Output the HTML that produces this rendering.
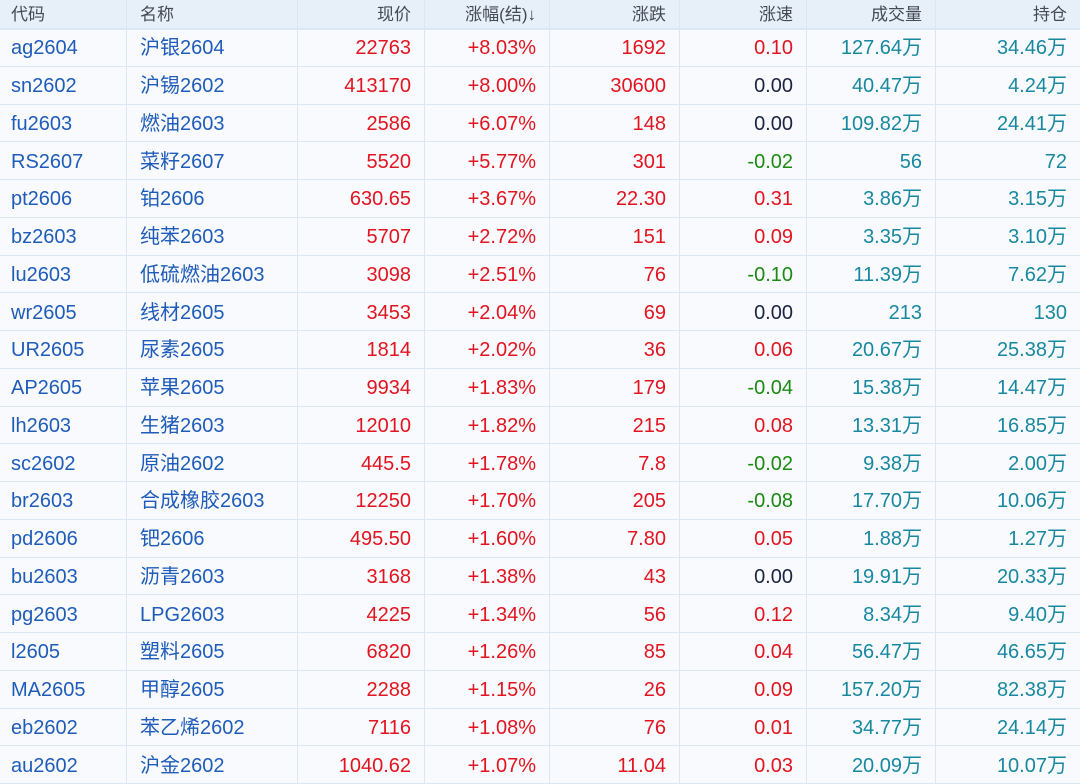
<!DOCTYPE html>
<html><head><meta charset="utf-8"><style>
html,body{margin:0;padding:0;background:#f8fafd;width:1080px;height:784px;overflow:hidden;position:relative;font-family:"Liberation Sans","Noto Sans CJK SC",sans-serif}
.row{position:absolute;left:0;width:1080px;display:flex;box-sizing:border-box;border-bottom:1.5px solid #dce7f5}
.row>div{box-sizing:border-box;height:100%;display:flex;align-items:center;justify-content:flex-end;padding:2px 13px 0;border-right:1.5px solid #dce7f5;white-space:nowrap;line-height:1}
.row>div:last-child{border-right:none}
.row>div:nth-child(1){width:127px;justify-content:flex-start;padding-left:11px;color:#1f5cb9}
.row>div:nth-child(2){width:171px;justify-content:flex-start;color:#1f5cb9}
.row>div:nth-child(3){width:127px;color:#e2141f}
.row>div:nth-child(4){width:125px;color:#e2141f}
.row>div:nth-child(5){width:130px;color:#e2141f}
.row>div:nth-child(6){width:127px}
.row>div:nth-child(7){width:129px;color:#1888a0}
.row>div:nth-child(8){width:144px;color:#1888a0}
.h{top:0;height:30px;background:#e7eff9;font-size:17px;border-bottom:2px solid #dce7f5}
.h>div{color:#444a55!important;padding-top:0!important}
.d{height:37.75px;font-size:20px}
.r{color:#e2141f}.g{color:#1b8a12}.k{color:#1c2440}
</style></head><body>
<div class="row h"><div>代码</div><div>名称</div><div>现价</div><div>涨幅(结)↓</div><div>涨跌</div><div>涨速</div><div>成交量</div><div>持仓</div></div>
<div class="row d" style="top:29px"><div>ag2604</div><div>沪银2604</div><div>22763</div><div>+8.03%</div><div>1692</div><div class="r">0.10</div><div>127.64万</div><div>34.46万</div></div>
<div class="row d" style="top:66.75px"><div>sn2602</div><div>沪锡2602</div><div>413170</div><div>+8.00%</div><div>30600</div><div class="k">0.00</div><div>40.47万</div><div>4.24万</div></div>
<div class="row d" style="top:104.5px"><div>fu2603</div><div>燃油2603</div><div>2586</div><div>+6.07%</div><div>148</div><div class="k">0.00</div><div>109.82万</div><div>24.41万</div></div>
<div class="row d" style="top:142.25px"><div>RS2607</div><div>菜籽2607</div><div>5520</div><div>+5.77%</div><div>301</div><div class="g">-0.02</div><div>56</div><div>72</div></div>
<div class="row d" style="top:180px"><div>pt2606</div><div>铂2606</div><div>630.65</div><div>+3.67%</div><div>22.30</div><div class="r">0.31</div><div>3.86万</div><div>3.15万</div></div>
<div class="row d" style="top:217.75px"><div>bz2603</div><div>纯苯2603</div><div>5707</div><div>+2.72%</div><div>151</div><div class="r">0.09</div><div>3.35万</div><div>3.10万</div></div>
<div class="row d" style="top:255.5px"><div>lu2603</div><div>低硫燃油2603</div><div>3098</div><div>+2.51%</div><div>76</div><div class="g">-0.10</div><div>11.39万</div><div>7.62万</div></div>
<div class="row d" style="top:293.25px"><div>wr2605</div><div>线材2605</div><div>3453</div><div>+2.04%</div><div>69</div><div class="k">0.00</div><div>213</div><div>130</div></div>
<div class="row d" style="top:331px"><div>UR2605</div><div>尿素2605</div><div>1814</div><div>+2.02%</div><div>36</div><div class="r">0.06</div><div>20.67万</div><div>25.38万</div></div>
<div class="row d" style="top:368.75px"><div>AP2605</div><div>苹果2605</div><div>9934</div><div>+1.83%</div><div>179</div><div class="g">-0.04</div><div>15.38万</div><div>14.47万</div></div>
<div class="row d" style="top:406.5px"><div>lh2603</div><div>生猪2603</div><div>12010</div><div>+1.82%</div><div>215</div><div class="r">0.08</div><div>13.31万</div><div>16.85万</div></div>
<div class="row d" style="top:444.25px"><div>sc2602</div><div>原油2602</div><div>445.5</div><div>+1.78%</div><div>7.8</div><div class="g">-0.02</div><div>9.38万</div><div>2.00万</div></div>
<div class="row d" style="top:482px"><div>br2603</div><div>合成橡胶2603</div><div>12250</div><div>+1.70%</div><div>205</div><div class="g">-0.08</div><div>17.70万</div><div>10.06万</div></div>
<div class="row d" style="top:519.75px"><div>pd2606</div><div>钯2606</div><div>495.50</div><div>+1.60%</div><div>7.80</div><div class="r">0.05</div><div>1.88万</div><div>1.27万</div></div>
<div class="row d" style="top:557.5px"><div>bu2603</div><div>沥青2603</div><div>3168</div><div>+1.38%</div><div>43</div><div class="k">0.00</div><div>19.91万</div><div>20.33万</div></div>
<div class="row d" style="top:595.25px"><div>pg2603</div><div>LPG2603</div><div>4225</div><div>+1.34%</div><div>56</div><div class="r">0.12</div><div>8.34万</div><div>9.40万</div></div>
<div class="row d" style="top:633px"><div>l2605</div><div>塑料2605</div><div>6820</div><div>+1.26%</div><div>85</div><div class="r">0.04</div><div>56.47万</div><div>46.65万</div></div>
<div class="row d" style="top:670.75px"><div>MA2605</div><div>甲醇2605</div><div>2288</div><div>+1.15%</div><div>26</div><div class="r">0.09</div><div>157.20万</div><div>82.38万</div></div>
<div class="row d" style="top:708.5px"><div>eb2602</div><div>苯乙烯2602</div><div>7116</div><div>+1.08%</div><div>76</div><div class="r">0.01</div><div>34.77万</div><div>24.14万</div></div>
<div class="row d" style="top:746.25px"><div>au2602</div><div>沪金2602</div><div>1040.62</div><div>+1.07%</div><div>11.04</div><div class="r">0.03</div><div>20.09万</div><div>10.07万</div></div>
</body></html>
